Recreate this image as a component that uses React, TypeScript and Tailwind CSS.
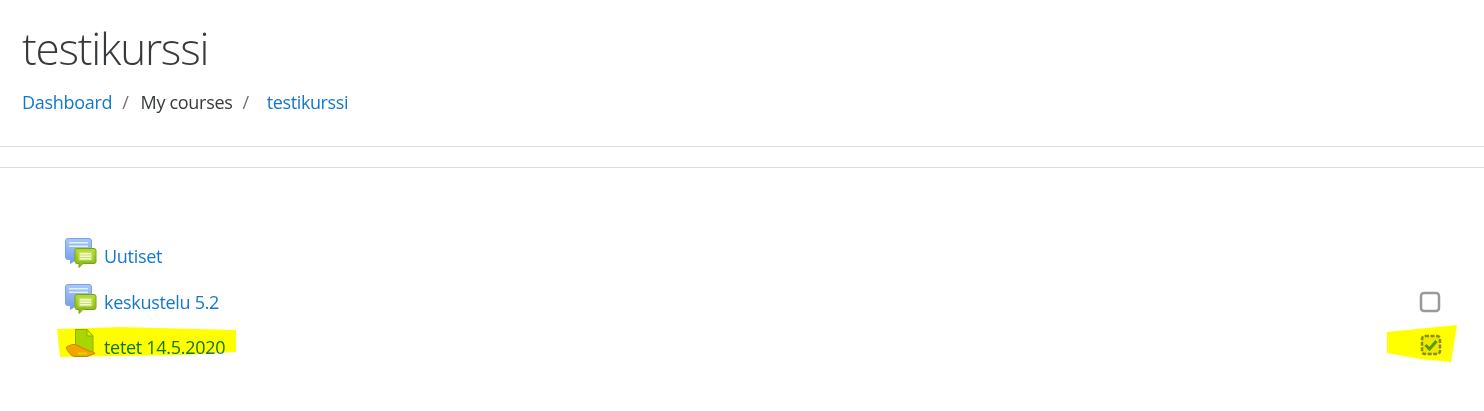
function ForumIcon() {
  return (
    <svg width="32" height="32" viewBox="0 0 32 32" className="shrink-0 -mt-[6px]">
      <defs>
        <linearGradient id="blue" x1="0" y1="0" x2="0" y2="1">
          <stop offset="0" stopColor="#a9c8f7" />
          <stop offset="1" stopColor="#6f9be8" />
        </linearGradient>
        <linearGradient id="green" x1="0" y1="0" x2="0" y2="1">
          <stop offset="0" stopColor="#b5dc36" />
          <stop offset="1" stopColor="#86b612" />
        </linearGradient>
      </defs>
      <path d="M3 1.5h21a2.5 2.5 0 0 1 2.5 2.5v16a2.5 2.5 0 0 1-2.5 2.5H11l-5.5 4v-4H3A2.5 2.5 0 0 1 .5 20V4A2.5 2.5 0 0 1 3 1.5z" fill="url(#blue)" stroke="#7ba3e6" />
      <rect x="4" y="5" width="19" height="1.5" fill="#e6effc" />
      <rect x="4" y="8.5" width="19" height="1.5" fill="#e6effc" />
      <path d="M12 11.5h17a2 2 0 0 1 2 2v11a2 2 0 0 1-2 2H18l-4 4v-4h-2a2 2 0 0 1-2-2v-11a2 2 0 0 1 2-2z" fill="url(#green)" stroke="#7aa313" />
      <rect x="13.5" y="14.5" width="14" height="9" fill="#c8e35f" />
      <rect x="15" y="16" width="11" height="1.5" fill="#f2f8dc" />
      <rect x="15" y="18.5" width="11" height="1.5" fill="#f2f8dc" />
      <rect x="15" y="21" width="11" height="1.5" fill="#f2f8dc" />
    </svg>
  );
}

function AssignIcon() {
  return (
    <svg width="32" height="32" viewBox="0 0 32 32" className="shrink-0 -mt-[4px]">
      <path d="M10.5 .5H22l6 6.5v17H10.5z" fill="#a9d51f" stroke="#8fb01c" />
      <path d="M22 .5V7h6z" fill="#dcef9a" stroke="#8fb01c" />
      <path d="M1 18.5c3-2 6-3.5 9.5-3L24 22c3 1 6 1.5 6 2.5l-8 3H10c-4 0-7-5-9-9z" fill="#f0a73e" stroke="#c98425" />
      <path d="M13 24.5h9" stroke="#d9d9d0" strokeWidth="2" />
    </svg>
  );
}

function ActivityRow({
  label,
  done,
  rowClass,
  children,
}: {
  label: string;
  done?: boolean;
  rowClass: string;
  children: React.ReactNode;
}) {
  return (
    <div className={`flex items-center ${rowClass}`}>
      {children}
      <a href="#" className="ml-[7px] text-[#1177d1] text-[18px] tracking-[-0.3px] whitespace-nowrap">
        {label}
      </a>
      <span className="ml-auto mr-[11px] flex">
        {done === undefined ? null : done ? (
          <svg width="22" height="22" viewBox="0 0 22 22" className="-mt-[4px] -mr-px ml-px">
            <rect x="2" y="2" width="18" height="18" rx="3" fill="#eaeaea" stroke="#8c8c8c" strokeWidth="2.5" strokeDasharray="4 1.5" />
            <path d="M5.5 11l4 4 7-8" fill="none" stroke="#5c9a18" strokeWidth="3" />
          </svg>
        ) : (
          <svg width="22" height="22" viewBox="0 0 22 22">
            <rect x="2" y="2" width="18" height="18" rx="3" fill="#fff" stroke="#999" strokeWidth="2.5" />
          </svg>
        )}
      </span>
    </div>
  );
}

export default function App() {
  return (
    <div className="relative w-[1484px] h-[411px] overflow-hidden bg-white font-['Open_Sans',sans-serif]">
      <header className="h-[147px] border-b border-[#dddddd] px-[22px] pt-[19px]">
        <h1 className="text-[44px] leading-[58px] font-light tracking-[-1.2px] text-[#373a3c]">testikurssi</h1>
        <nav className="flex items-center mt-[12px] text-[18px] leading-[26px] tracking-[-0.3px] text-[#373a3c]">
          <a href="#" className="text-[#1177d1]">Dashboard</a>
          <span className="ml-[10px] mr-[12px] text-[#6a737b]">/</span>
          <span>My courses</span>
          <span className="mx-[10px] text-[#6a737b]">/</span>
          <a href="#" className="ml-[8px] tracking-[-0.4px] text-[#1177d1]">testikurssi</a>
        </nav>
      </header>
      <div className="h-[21px] border-b border-[#dddddd]" />
      <main className="pl-[65px] pr-[32px] pt-[65px]">
        <ActivityRow label="Uutiset" rowClass="h-[46px]"><ForumIcon /></ActivityRow>
        <ActivityRow label="keskustelu 5.2" done={false} rowClass="h-[46px]"><ForumIcon /></ActivityRow>
        <ActivityRow label="tetet 14.5.2020" done={true} rowClass="h-[44px]"><AssignIcon /></ActivityRow>
      </main>
      {/* marker highlights drawn over the page */}
      <svg className="absolute left-0 top-0 pointer-events-none mix-blend-multiply" width="1484" height="411">
        <polygon points="57,329 120,327 236,330 236,352 180,355 60,357" fill="#ffff00" />
        <polygon points="1387,332 1457,325 1451,362 1420,359 1387,353" fill="#ffff00" />
      </svg>
    </div>
  );
}
